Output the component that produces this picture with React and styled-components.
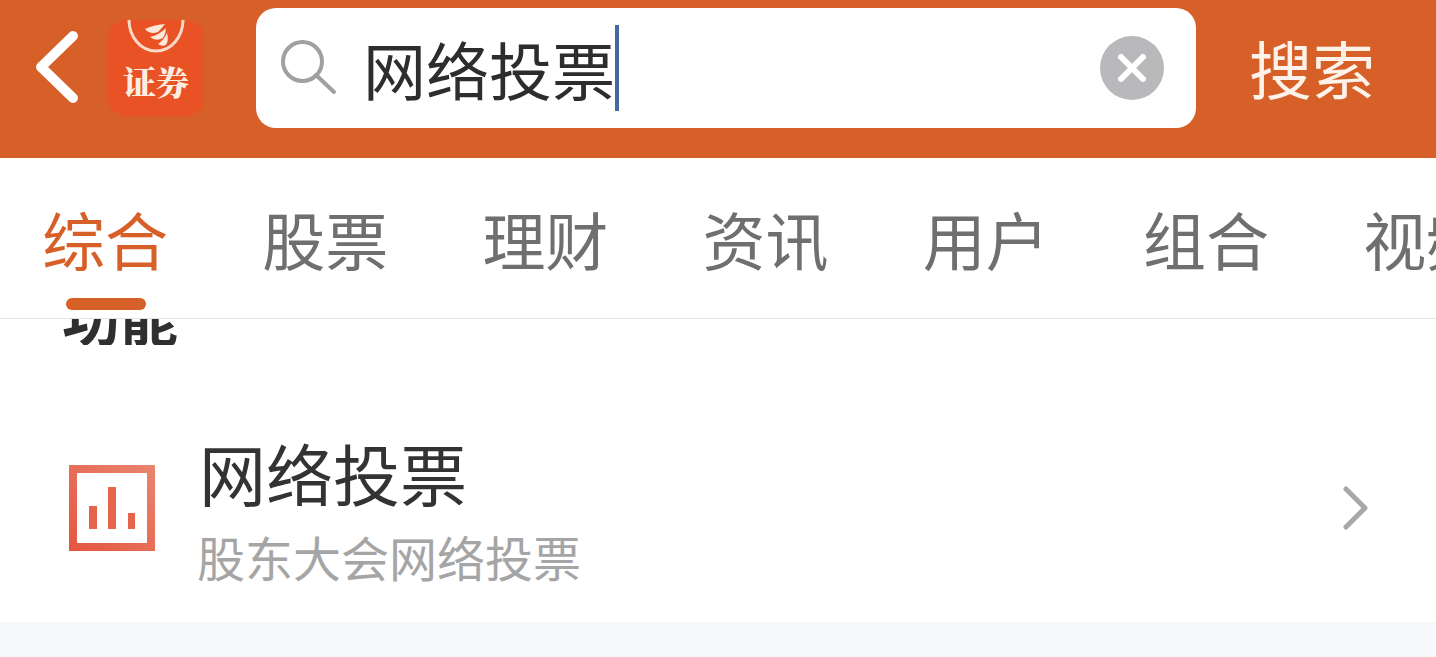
import React from 'react';
import styled, { createGlobalStyle } from 'styled-components';

const GlobalStyle = createGlobalStyle`
  html, body {
    margin: 0;
    padding: 0;
    background: #fff;
    overflow: hidden;
  }
  * { box-sizing: border-box; }
`

const Page = styled.div`
  width: 1436px;
  height: 657px;
  display: flex;
  flex-direction: column;
  overflow: hidden;
  font-family: "Noto Sans CJK SC", "Liberation Sans", sans-serif;
`

const Header = styled.header`
  height: 158px;
  flex: none;
  display: flex;
  align-items: flex-start;
  padding: 8px 0 0 32px;
  background: #d76028;
`

const BackBtn = styled.div`
  width: 76px;
  height: 120px;
  display: flex;
  align-items: center;
`

const Logo = styled.div`
  width: 96px;
  height: 96px;
  margin-top: 12px;
  flex: none;
  display: flex;
  flex-direction: column;
  align-items: center;
  justify-content: flex-end;
  padding-bottom: 15px;
  border-radius: 18px;
  background: #e95224;
  overflow: hidden;
  position: relative;
`

const LogoMark = styled.svg`
  position: absolute;
  top: 0;
  left: 0;
`

const LogoText = styled.span`
  font-family: "Noto Serif CJK SC", "Noto Sans CJK SC", sans-serif;
  font-size: 33px;
  line-height: 40px;
  font-weight: 900;
  color: #fdeee2;
`

const SearchBox = styled.div`
  width: 940px;
  height: 120px;
  margin-left: 52px;
  flex: none;
  display: flex;
  align-items: center;
  padding: 0 32px 0 24px;
  border-radius: 20px;
  background: #fff;
`

const SearchValue = styled.div`
  flex: 1;
  display: flex;
  align-items: center;
  margin-left: 25px;
  font-size: 63px;
  line-height: 116px;
  color: #2d2d2d;
`

const Caret = styled.span`
  width: 4px;
  height: 86px;
  margin-top: -1px;
  background: #44699c;
`

const SearchBtn = styled.div`
  margin-left: 53px;
  font-size: 63px;
  line-height: 118px;
  color: #fdf3ea;
`

const Tabs = styled.nav`
  height: 161px;
  flex: none;
  display: flex;
  gap: 94.2px;
  padding-left: 42px;
  border-bottom: 1px solid #e4e4e4;
  background: #fff;
  overflow: hidden;
`

const Tab = styled.div`
  position: relative;
  flex: none;
  width: 126px;
  font-size: 63px;
  line-height: 160px;
  white-space: nowrap;
  color: ${props => (props.$active ? '#d76028' : '#6f6f6f')};
`

const TabMark = styled.span`
  position: absolute;
  left: 24px;
  bottom: 8px;
  width: 80px;
  height: 12px;
  border-radius: 6px;
  background: #d76028;
`

const Section = styled.section`
  flex: 1;
  display: flex;
  flex-direction: column;
  background: #f7f8fa;
`

const SectionTitleClip = styled.div`
  height: 26px;
  flex: none;
  display: flex;
  align-items: flex-end;
  padding-left: 62px;
  overflow: hidden;
  background: #fff;
`

const SectionTitle = styled.h2`
  margin: 0;
  font-size: 58px;
  line-height: 58px;
  font-weight: 700;
  white-space: nowrap;
  color: #2f2f2f;
`

const Row = styled.div`
  height: 277px;
  flex: none;
  display: flex;
  align-items: center;
  padding: 48px 67px 0 69px;
  background: #fff;
`

const RowBody = styled.div`
  flex: 1;
  margin-left: 44px;
  padding-top: 4px;
`

const RowTitle = styled.div`
  font-size: 67px;
  line-height: 88px;
  color: #333;
`

const RowSub = styled.div`
  margin-top: 5px;
  font-size: 48px;
  line-height: 70px;
  margin-left: -2px;
  color: #a5a5a5;
`

export default function App() {
  return (
    <Page>
      <GlobalStyle />
      <Header>
        <BackBtn>
          <svg width="48" height="76" viewBox="0 0 48 76">
            <path d="M41 6 L9 37 L41 68" fill="none" stroke="#fff" strokeWidth="10" strokeLinecap="round" strokeLinejoin="round" />
          </svg>
        </BackBtn>
        <Logo>
          <LogoMark width="96" height="50" viewBox="0 0 96 50">
            <path d="M21 0 A27 31 0 0 0 75 0" fill="none" stroke="#fbd9c8" strokeWidth="3" />
            <path d="M37 9 Q45 5 57 4 Q53 9 50 12 Q42 15 37 9 Z M42 17 Q51 15 58 8 Q58 13 55 18 Q48 22 42 17 Z M50 24 Q56 20 59 13 Q61 20 58 25 Q54 27 50 24 Z" fill="#fde9dc" />
          </LogoMark>
          <LogoText>证券</LogoText>
        </Logo>
        <SearchBox>
          <svg width="58" height="58" viewBox="0 0 58 58">
            <circle cx="22.5" cy="22.5" r="19.5" fill="none" stroke="#a0a0a0" strokeWidth="4" />
            <path d="M36 36 L54 53" stroke="#a0a0a0" strokeWidth="4" strokeLinecap="round" />
          </svg>
          <SearchValue>
            网络投票
            <Caret />
          </SearchValue>
          <svg width="64" height="64" viewBox="0 0 64 64">
            <circle cx="32" cy="32" r="32" fill="#b9b9bb" />
            <path d="M21 21 L43 43 M43 21 L21 43" stroke="#fff" strokeWidth="6" strokeLinecap="round" />
          </svg>
        </SearchBox>
        <SearchBtn>搜索</SearchBtn>
      </Header>
      <Tabs>
        <Tab $active>
          综合
          <TabMark />
        </Tab>
        <Tab>股票</Tab>
        <Tab>理财</Tab>
        <Tab>资讯</Tab>
        <Tab>用户</Tab>
        <Tab>组合</Tab>
        <Tab>视频</Tab>
      </Tabs>
      <Section>
        <SectionTitleClip>
          <SectionTitle>功能</SectionTitle>
        </SectionTitleClip>
        <Row>
          <svg width="86" height="86" viewBox="0 0 86 86">
            <defs>
              <linearGradient id="voteGrad" x1="0" y1="1" x2="1" y2="0">
                <stop offset="0" stopColor="#e5563f" />
                <stop offset="1" stopColor="#e98570" />
              </linearGradient>
            </defs>
            <path fillRule="evenodd" d="M0 0 H86 V86 H0 Z M8 8 V78 H78 V8 Z" fill="url(#voteGrad)" />
            <rect x="20" y="41" width="8" height="23" fill="#e7644c" />
            <rect x="39" y="22" width="8" height="42" fill="#e7644c" />
            <rect x="59" y="48" width="7" height="16" fill="#e7644c" />
          </svg>
          <RowBody>
            <RowTitle>网络投票</RowTitle>
            <RowSub>股东大会网络投票</RowSub>
          </RowBody>
          <svg width="26" height="44" viewBox="0 0 26 44">
            <path d="M3 3 L22 22 L3 41" fill="none" stroke="#a8a8a8" strokeWidth="5" strokeLinecap="round" strokeLinejoin="round" />
          </svg>
        </Row>
      </Section>
    </Page>
  );
}
